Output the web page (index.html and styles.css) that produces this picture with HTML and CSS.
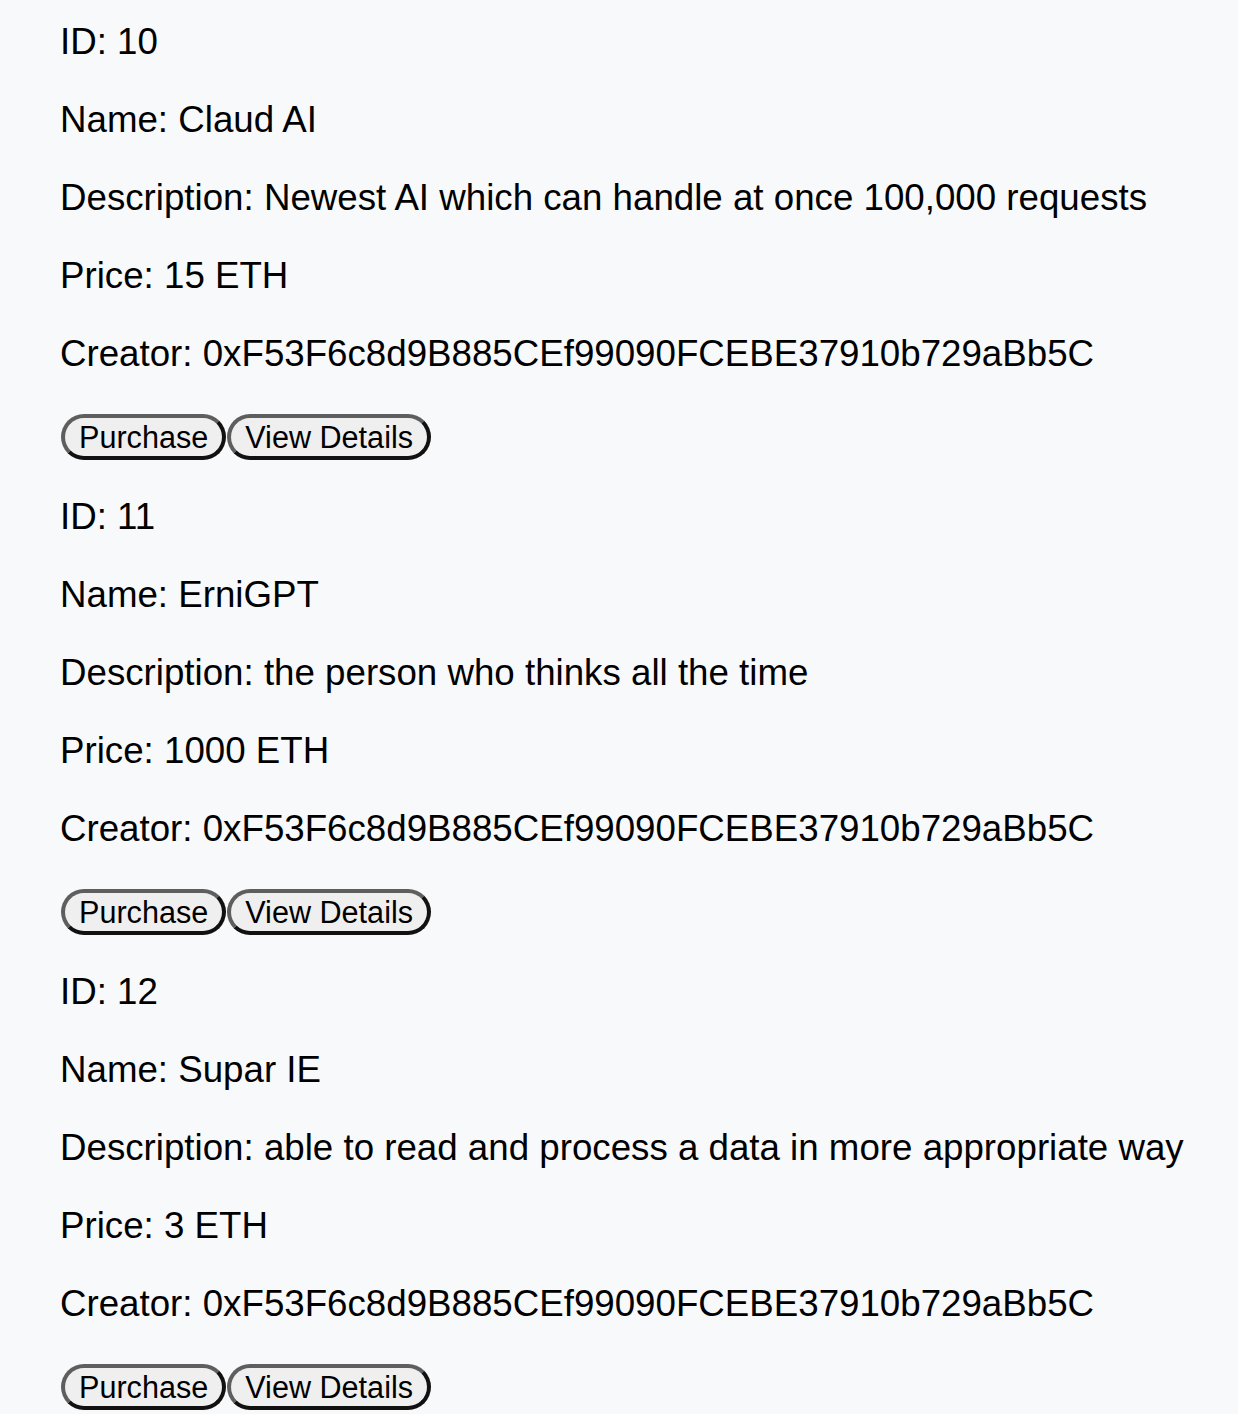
FILE: index.html
```html
<!DOCTYPE html>
<html lang="en">
<head>
<meta charset="utf-8">
<title>AI Marketplace</title>
<link rel="stylesheet" href="styles.css">
</head>
<body>
<main class="list">
  <section class="item">
    <p>ID: 10</p>
    <p>Name: Claud AI</p>
    <p>Description: Newest AI which can handle at once 100,000 requests</p>
    <p>Price: 15 ETH</p>
    <p>Creator: 0xF53F6c8d9B885CEf99090FCEBE37910b729aBb5C</p>
    <div class="actions"><button class="btn">Purchase</button><button class="btn">View Details</button></div>
  </section>
  <section class="item">
    <p>ID: 11</p>
    <p>Name: ErniGPT</p>
    <p>Description: the person who thinks all the time</p>
    <p>Price: 1000 ETH</p>
    <p>Creator: 0xF53F6c8d9B885CEf99090FCEBE37910b729aBb5C</p>
    <div class="actions"><button class="btn">Purchase</button><button class="btn">View Details</button></div>
  </section>
  <section class="item">
    <p>ID: 12</p>
    <p>Name: Supar IE</p>
    <p>Description: able to read and process a data in more appropriate way</p>
    <p>Price: 3 ETH</p>
    <p>Creator: 0xF53F6c8d9B885CEf99090FCEBE37910b729aBb5C</p>
    <div class="actions"><button class="btn">Purchase</button><button class="btn">View Details</button></div>
  </section>
</main>
</body>
</html>
```
FILE: styles.css
```css
html, body {
  margin: 0;
  padding: 0;
  background: #f8f9fb;
}
body {
  font-family: "Liberation Sans", Arial, sans-serif;
  color: #000;
}
.list {
  display: flex;
  flex-direction: column;
  gap: 36px;
  padding: 21px 0 0 60px;
}
.item {
  display: flex;
  flex-direction: column;
  gap: 36px;
}
.item p {
  margin: 0;
  font-size: 36.7px;
  line-height: 42px;
  white-space: nowrap;
}
.actions {
  display: flex;
  margin-top: 3px;
  margin-left: 1px;
}
.btn {
  font-family: "Liberation Sans", Arial, sans-serif;
  font-size: 30.6px;
  line-height: 34px;
  color: #000;
  background: #efefef;
  padding: 2px 14px;
  border-width: 4px;
  border-style: solid;
  border-color: #5e5e5e #111 #111 #5e5e5e;
  border-radius: 24px;
  margin: 0 1px 0 0;
  cursor: pointer;
}
```
